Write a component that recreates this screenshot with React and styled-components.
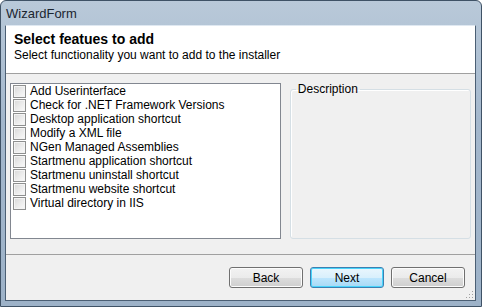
import React from 'react';
import styled, { createGlobalStyle } from 'styled-components';

const features = [
  'Add Userinterface',
  'Check for .NET Framework Versions',
  'Desktop application shortcut',
  'Modify a XML file',
  'NGen Managed Assemblies',
  'Startmenu application shortcut',
  'Startmenu uninstall shortcut',
  'Startmenu website shortcut',
  'Virtual directory in IIS',
];

const GlobalStyle = createGlobalStyle`
  html, body {
    margin: 0;
    padding: 0;
    background: #ffffff;
  }
  body {
    font-family: "Liberation Sans", Arial, sans-serif;
    font-size: 12px;
    color: #000;
  }
`;

const Window = styled.div`
  width: 482px;
  height: 307px;
  box-sizing: border-box;
  display: flex;
  flex-direction: column;
  background: linear-gradient(180deg, #b9c9d9 0%, #a3b7cc 40%, #9db2c8 100%);
  border: 1px solid #3f5266;
  border-radius: 6px 6px 0 0;
`;

const TitleBar = styled.div`
  height: 24px;
  display: flex;
  align-items: center;
  padding-left: 5px;
  font-size: 13px;
  color: #1b2530;
`;

const Client = styled.div`
  flex: 1;
  margin: 0 5px 5px 4px;
  display: flex;
  flex-direction: column;
  background: #f0f0f0;
  border: 1px solid #4b5f74;
  border-top-color: #dfe8f1;
`;

const Header = styled.div`
  height: 48px;
  box-sizing: border-box;
  background: #ffffff;
  border-bottom: 1px solid #a0a0a0;
  padding: 4px 8px 0;
`;

const Title = styled.div`
  font-weight: bold;
  font-size: 14px;
  line-height: 18px;
`;

const Subtitle = styled.div`
  line-height: 14px;
`;

const Body = styled.div`
  display: flex;
  padding: 9px 4px 0 4px;
  height: 165px;
  box-sizing: border-box;
`;

const ListBox = styled.div`
  width: 272px;
  height: 156px;
  box-sizing: border-box;
  background: #ffffff;
  border: 1px solid #828790;
  padding: 0 2px;
`;

const Row = styled.label`
  display: flex;
  align-items: center;
  height: 14px;
  gap: 4px;
  white-space: nowrap;
`;

const Box = styled.span`
  width: 11px;
  height: 11px;
  border: 1px solid #8e8f8f;
  background: linear-gradient(135deg, #d8d8d8 0%, #ececec 55%, #fafafa 100%);
  box-shadow: inset 0 0 0 1px #f4f4f4;
  flex: none;
`;

const Group = styled.fieldset`
  margin: 0 0 0 9px;
  width: 182px;
  height: 156px;
  box-sizing: border-box;
  border: 1px solid #d5dfe5;
  border-radius: 3px;
  box-shadow: inset 1px 1px 0 #ffffff;
  padding: 0;
  background: #f0f0f0;
`;

const Legend = styled.legend`
  margin-left: 5px;
  padding: 0 2px;
  line-height: 13px;
  color: #000;
`;

const Footer = styled.div`
  margin-top: 15px;
  flex: 1;
  border-top: 1px solid #a0a0a0;
  display: flex;
  justify-content: flex-end;
  align-items: flex-start;
  gap: 7px;
  padding: 12px 10px 0 0;
  position: relative;
`;

const Button = styled.button`
  width: 74px;
  height: 21px;
  font-family: inherit;
  font-size: 12px;
  color: #000;
  border: 1px solid ${p => (p.$default ? '#3c7fb1' : '#707070')};
  border-radius: 3px;
  background: ${p =>
    p.$default
      ? 'linear-gradient(180deg, #eaf6fd 0%, #d9f0fc 50%, #bee6fd 51%, #a7d9f5 100%)'
      : 'linear-gradient(180deg, #f2f2f2 0%, #ebebeb 50%, #dddddd 51%, #cfcfcf 100%)'};
  box-shadow: inset 0 0 0 1px ${p => (p.$default ? '#48d4fb' : '#fcfcfc')};
  padding: 0;
`;

const Grip = styled.svg`
  position: absolute;
  right: 1px;
  bottom: 1px;
`;

export default function App() {
  return (
    <>
      <GlobalStyle />
      <Window>
        <TitleBar>WizardForm</TitleBar>
        <Client>
          <Header>
            <Title>Select featues to add</Title>
            <Subtitle>Select functionality you want to add to the installer</Subtitle>
          </Header>
          <Body>
            <ListBox>
              {features.map(f => (
                <Row key={f}>
                  <Box />
                  {f}
                </Row>
              ))}
            </ListBox>
            <Group>
              <Legend>Description</Legend>
            </Group>
          </Body>
          <Footer>
            <Button>Back</Button>
            <Button $default>Next</Button>
            <Button>Cancel</Button>
            <Grip width="10" height="10" viewBox="0 0 10 10">
              {[[8, 2], [8, 5], [5, 5], [8, 8], [5, 8], [2, 8]].map(([x, y]) => (
                <rect key={`${x}-${y}`} x={x} y={y} width="1" height="1" fill="#a0a0a0" />
              ))}
            </Grip>
          </Footer>
        </Client>
      </Window>
    </>
  );
}
